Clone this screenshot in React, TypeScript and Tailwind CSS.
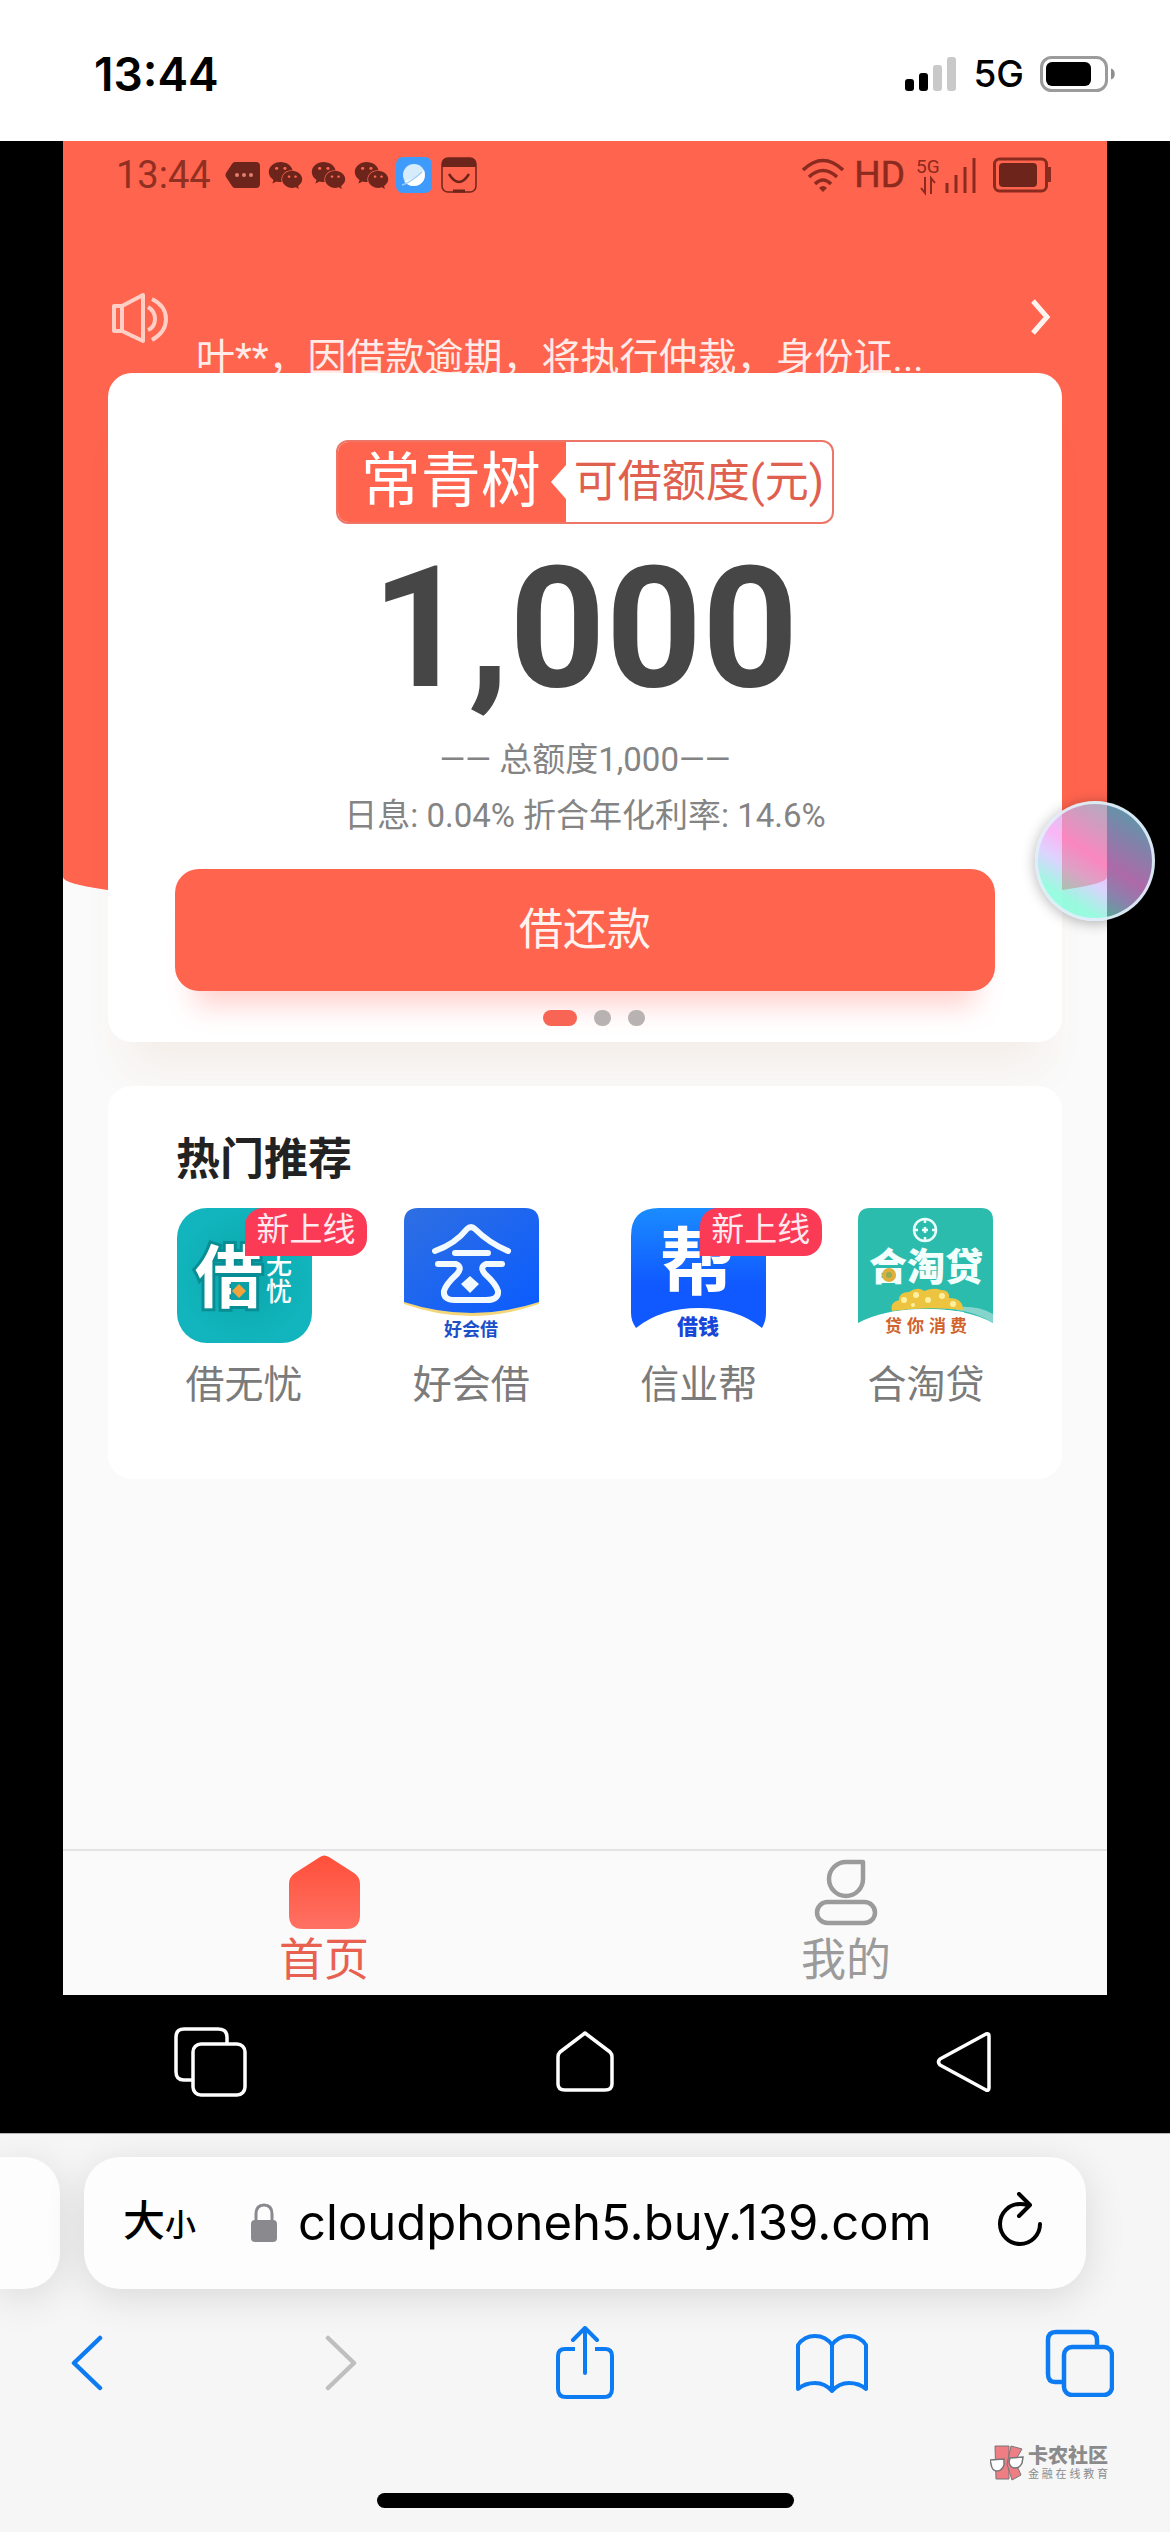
import React from "react";
import { FaWeixin } from "react-icons/fa";

const CJK = "font-['Roboto','Noto_Sans_CJK_SC',sans-serif]";

function IosStatusBar() {
  return (
    <header className="flex h-[141px] shrink-0 items-start justify-between bg-white pr-[54px] pl-[94px] font-['Inter',sans-serif] text-black">
      <time className="pt-[46px] text-[46px] leading-[56px] font-semibold">13:44</time>
      <div className="flex items-center pt-[46px]">
        <svg className="mr-[16px] h-[35px] w-[52px]" viewBox="0 0 52 35" aria-label="信号">
          <rect x="0" y="22" width="9" height="12" rx="3" fill="#000" />
          <rect x="14" y="16" width="9" height="18" rx="3" fill="#000" />
          <rect x="28" y="8" width="9" height="26" rx="3" fill="#c9c9c9" />
          <rect x="42" y="0" width="9" height="34" rx="3" fill="#c9c9c9" />
        </svg>
        <span className="mr-[16px] text-[37px] leading-[56px] font-medium">5G</span>
        <svg className="h-[36px] w-[76px]" viewBox="0 0 76 36" aria-label="电量">
          <rect x="1.5" y="1.5" width="65" height="33" rx="10" fill="none" stroke="#9b9b9b" strokeWidth="3" />
          <rect x="6" y="6" width="45" height="24" rx="6" fill="#000" />
          <path d="M71 12.5c5 1 5 10 0 11z" fill="#8e8e8e" />
        </svg>
      </div>
    </header>
  );
}

function AndroidStatusBar() {
  return (
    <div className="flex h-[72px] items-start justify-between pt-[10px] pr-[56px] pl-[53px] text-[#6d251b]">
      <div className="flex items-center">
        <span className="mr-[14px] text-[38px] leading-[48px] text-[#8f3023]">13:44</span>
        <svg className="mr-[8px] h-[28px] w-[35px]" viewBox="0 0 35 28">
          <path d="M10 1h21q4 0 4 4v18q0 4-4 4H10q-2 0-3-2L1 16q-1-2 0-4L7 3q1-2 3-2z" fill="currentColor" />
          <circle cx="12" cy="14" r="2" fill="#e0806f" />
          <circle cx="19" cy="14" r="2" fill="#e0806f" />
          <circle cx="26" cy="14" r="2" fill="#e0806f" />
        </svg>
        <div className="mr-[7px] flex gap-[8px]">
          <FaWeixin size={35} />
          <FaWeixin size={35} />
          <FaWeixin size={35} />
        </div>
        <svg className="mr-[9px] h-[36px] w-[36px]" viewBox="0 0 36 36">
          <rect width="36" height="36" rx="7" fill="#3f9bfb" />
          <circle cx="18" cy="18" r="11" fill="#d6ecfd" />
          <path d="M8 24q11-1 20-11q3 12-7 15.500q-8 2-13-4.500z" fill="#fff" />
          <path d="M6 28q8-2 20-13" fill="none" stroke="#9fd0fb" strokeWidth="1.500" />
        </svg>
        <svg className="h-[36px] w-[36px]" viewBox="0 0 36 36">
          <rect x="1" y="1" width="34" height="34" rx="6" fill="none" stroke="currentColor" strokeWidth="1.500" />
          <path d="M1 10V7q0-6 6-6h22q6 0 6 6v3z" fill="currentColor" />
          <path d="M8 17q10 16 20 0" fill="none" stroke="currentColor" strokeWidth="2.500" />
          <path d="M12 34h12" stroke="currentColor" strokeWidth="3" />
        </svg>
      </div>
      <div className="flex h-[48px] items-center text-[#8b2a1e]">
        <svg className="mr-[10px] h-[34px] w-[42px]" viewBox="0 0 42 34" fill="none" stroke="currentColor" strokeWidth="3.500">
          <path d="M1 12q20-19 40 0M7 19q14-13 28 0M13 26q8-8 16 0" />
          <path d="M17 30q4-4 8 0l-4 4z" fill="currentColor" stroke="none" />
        </svg>
        <span className="mr-[11px] text-[37px] leading-[48px] [-webkit-text-stroke:0.5px_currentColor]">HD</span>
        <svg className="mr-[16px] h-[40px] w-[61px] overflow-visible" viewBox="0 0 61 40">
          <text x="0" y="18" fontSize="19" fontFamily="Roboto, sans-serif" fill="currentColor">5G</text>
          <path d="M9 22v16l-4-5M15 39V23l4 5" fill="none" stroke="currentColor" strokeWidth="2" />
          <path d="M31 28v10M40 20v18M49 12v26M58 3v35" stroke="currentColor" strokeWidth="3" />
        </svg>
        <svg className="h-[36px] w-[58px]" viewBox="0 0 58 36">
          <rect x="1.500" y="2" width="52" height="32" rx="5" fill="none" stroke="currentColor" strokeWidth="3" />
          <rect x="6" y="6" width="38" height="24" rx="4" fill="#6d251b" />
          <path d="M54 10h4v15h-4z" fill="currentColor" />
        </svg>
      </div>
    </div>
  );
}

function Notice() {
  return (
    <div className="flex h-[160px] items-start overflow-hidden pr-[56px] pl-[48px]">
      <svg className="mt-[80px] h-[51px] w-[58px] shrink-0" viewBox="0 0 58 51" fill="none" stroke="#ffcfc6" strokeWidth="4">
        <path d="M3 13h8v25H3zM11 13L32 2v46L11 38" strokeLinejoin="round" />
        <path d="M37 14q7 4 7 12t-7 11M41 6q14 7 14 20T41 47" />
      </svg>
      <a href="#notice" className="mt-[117px] ml-[27px] min-w-0 flex-1 text-[39px] leading-[56px] whitespace-nowrap text-[#ffece8]">
        叶**，因借款逾期，将执行仲裁，身份证...
      </a>
      <button type="button" aria-label="查看公告" className="mt-[84px]">
        <svg className="h-[40px] w-[20px]" viewBox="0 0 20 40" fill="none" stroke="#fff3f0" strokeWidth="5">
          <path d="M2 4L16 20L2 36" />
        </svg>
      </button>
    </div>
  );
}

function LoanCard() {
  return (
    <section className="relative mx-[45px] flex flex-col items-center rounded-[24px] bg-white px-[67px] pt-[67px] pb-[16px] shadow-[0_44px_44px_-20px_rgba(190,110,50,0.09)]">
      <div className="flex h-[84px] items-stretch overflow-hidden rounded-[12px] border-2 border-[#ee7668]">
        <span className="flex items-center bg-[#ff644e] pr-[8px] pl-[23px] text-[60px] leading-[80px] text-white">常青树</span>
        <svg className="h-full w-[17px] bg-[#ff644e]" viewBox="0 0 17 80">
          <path d="M17 23L2 40L17 57z" fill="#fff" />
        </svg>
        <span className="flex items-center px-[8px] text-[44px] leading-[80px] text-[#e0604f]">可借额度(元)</span>
      </div>
      <p className="mt-[9px] text-[168px] leading-[192px] font-bold text-[#464646]">1,000</p>
      <p className="mt-[7px] text-[33px] leading-[56px] text-[#848484]">—— 总额度1,000——</p>
      <p className="text-[33px] leading-[56px] text-[#848484]">日息: 0.04% 折合年化利率: 14.6%</p>
      <button
        type="button"
        className="mt-[25px] h-[122px] w-full rounded-[24px] bg-[#ff644e] text-[44px] leading-[56px] text-[#fff3ef] shadow-[0_34px_28px_-20px_rgba(255,100,90,0.30)]"
      >
        借还款
      </button>
      <div className="mt-[19px] flex gap-[17px] pl-[18px]">
        <i className="h-[16px] w-[34px] rounded-full bg-[#f96555]" />
        <i className="h-[16px] w-[17px] rounded-full bg-[#b8b2b1]" />
        <i className="h-[16px] w-[17px] rounded-full bg-[#b8b2b1]" />
      </div>
    </section>
  );
}

const logoFont = "'Noto Sans CJK SC', sans-serif";

function LogoJieWuYou() {
  return (
    <svg className="h-[135px] w-[135px]" viewBox="0 0 135 135">
      <defs>
        <radialGradient id="teal">
          <stop offset="0" stopColor="#0aa5aa" />
          <stop offset="1" stopColor="#12b5bd" />
        </radialGradient>
      </defs>
      <rect width="135" height="135" rx="30" fill="url(#teal)" />
      <text x="18" y="94" fontSize="68" fontWeight="700" fontFamily={logoFont} fill="#fff" stroke="#078e94" strokeWidth="6" paintOrder="stroke">借</text>
      <text x="89" y="66" fontSize="26" fontWeight="500" fontFamily={logoFont} fill="#fff">无</text>
      <text x="89" y="93" fontSize="26" fontWeight="500" fontFamily={logoFont} fill="#fff">忧</text>
      <path d="M54 74h18v18H54z" fill="#0aa0a6" />
      <path d="M62 76l7 7l-7 7l-7-7z" fill="#f2a33c" />
    </svg>
  );
}

function LogoHaoHuiJie() {
  return (
    <svg className="h-[135px] w-[135px]" viewBox="0 0 135 135">
      <defs>
        <linearGradient id="royal" x1="0" y1="0" x2="1" y2="1">
          <stop offset="0" stopColor="#2f6fe2" />
          <stop offset="1" stopColor="#0a5cff" />
        </linearGradient>
      </defs>
      <path d="M0 20V96q67 24 135 0V20z" fill="#f3d67a" />
      <path d="M14 0H121q14 0 14 14V94q-67 22-135 0V14Q0 0 14 0z" fill="url(#royal)" />
      <g fill="none" stroke="#f2faff" strokeWidth="6" strokeLinecap="round" strokeLinejoin="round">
        <path d="M31 43Q51 36 63 21Q67 17 71 21Q85 35 104 43" />
        <path d="M51 45H84M34 56H52Q59 59 53 66Q42 76 40 83Q39 92 51 92H82Q95 92 94 83Q92 76 81 66Q75 59 82 56H98" />
      </g>
      <path d="M66 68l9 8l-9 9l-9-9z" fill="#f2faff" />
      <text x="67" y="128" fontSize="18" fontWeight="700" textAnchor="middle" fontFamily={logoFont} fill="#1d50c8">好会借</text>
    </svg>
  );
}

function LogoXinYeBang() {
  return (
    <svg className="h-[135px] w-[135px]" viewBox="0 0 135 135">
      <defs>
        <linearGradient id="azure" x1="0" y1="0" x2="0" y2="1">
          <stop offset="0" stopColor="#1a8cff" />
          <stop offset="0.650" stopColor="#1058ff" />
        </linearGradient>
      </defs>
      <path d="M28 0H107q28 0 28 28V105q0 8-4 15q-25-20-63-20T5 120Q0 113 0 105V28Q0 0 28 0z" fill="url(#azure)" />
      <text x="66" y="81" fontSize="74" fontWeight="700" textAnchor="middle" fontFamily={logoFont} fill="#fff">帮</text>
      <text x="67" y="126" fontSize="21" fontWeight="900" textAnchor="middle" fontFamily={logoFont} fill="#1746d8">借钱</text>
    </svg>
  );
}

function LogoHeTaoDai() {
  return (
    <svg className="h-[135px] w-[135px]" viewBox="0 0 135 135">
      <path d="M12 0H123q12 0 12 12V115q-25-14-67-14T0 115V12Q0 0 12 0z" fill="#2bbcae" />
      <path d="M98 99Q120 97 135 106V115Q118 104 98 102z" fill="#86d5cc" />
      <g fill="none" stroke="#e9fffb" strokeWidth="2.500">
        <circle cx="67" cy="22" r="11" />
        <path d="M67 11v4M67 29v4M56 22h4M74 22h4M64 22h6M67 19v6" />
      </g>
      <text x="68" y="72" fontSize="38" fontWeight="900" textAnchor="middle" fontFamily={logoFont} fill="#f2fffd">合淘贷</text>
      <circle cx="31" cy="67" r="7" fill="#e0ae3a" />
      <circle cx="31" cy="67" r="3" fill="#8fae55" />
      <path d="M34 103q-3-8 7-11q0-8 10-8q9-6 15-1q10-4 17-1q9 0 8 8q14 0 14 12q-35-4-71 1z" fill="#ecc43f" />
      <g fill="#fff0a0">
        <circle cx="46" cy="92" r="3" />
        <circle cx="58" cy="87" r="3" />
        <circle cx="70" cy="92" r="3" />
        <circle cx="84" cy="88" r="3" />
        <circle cx="95" cy="96" r="3" />
        <circle cx="55" cy="97" r="2" />
      </g>
      <path d="M32 104Q68 98 106 104V108H32z" fill="#fff" />
      <text y="124" fontSize="17" fontWeight="700" fontFamily={logoFont} fill="#d0622c" x="27 49 71 92">贷你消费</text>
    </svg>
  );
}

const products = [
  { name: "借无忧", Logo: LogoJieWuYou, fresh: true },
  { name: "好会借", Logo: LogoHaoHuiJie, fresh: false },
  { name: "信业帮", Logo: LogoXinYeBang, fresh: true },
  { name: "合淘贷", Logo: LogoHeTaoDai, fresh: false },
];

function HotList() {
  return (
    <section className="relative mx-[45px] mt-[44px] rounded-[24px] bg-white px-[68px] pt-[46px] pb-[66px]">
      <h2 className="text-[44px] leading-[56px] font-bold text-[#222]">热门推荐</h2>
      <ul className="mt-[20px] flex justify-between">
        {products.map(({ name, Logo, fresh }) => (
          <li key={name}>
            <a href="#product" className="relative flex w-[136px] flex-col items-center">
              <Logo />
              {fresh && (
                <span className="absolute top-0 left-[69px] h-[48px] w-[122px] rounded-[18px] rounded-bl-none bg-[#fb3a56] text-center text-[33px] leading-[44px] whitespace-nowrap text-[#ffe9ee]">
                  新上线
                </span>
              )}
              <span className="mt-[14px] text-[39px] leading-[56px] whitespace-nowrap text-[#7b7b7b]">{name}</span>
            </a>
          </li>
        ))}
      </ul>
    </section>
  );
}

function TabBar() {
  return (
    <nav className="mt-auto grid h-[146px] grid-cols-2 border-t-2 border-[#e4e4e4]">
      <a href="#home" className="flex flex-col items-center pt-[4px] text-[#e8604f]">
        <svg className="h-[74px] w-[71px]" viewBox="0 0 71 74">
          <defs>
            <linearGradient id="home" x1="0" y1="0" x2="0" y2="1">
              <stop offset="0" stopColor="#ff4f3a" />
              <stop offset="1" stopColor="#ff7163" />
            </linearGradient>
          </defs>
          <path d="M31 2q4-3 9 0L65 18q6 4 6 11V60q0 14-14 14H14Q0 74 0 60V29q0-7 6-11z" fill="url(#home)" />
        </svg>
        <span className="mt-[4px] text-[45px] leading-[56px]">首页</span>
      </a>
      <a href="#mine" className="flex flex-col items-center pt-[4px] text-[#9b9b9b]">
        <svg className="h-[74px] w-[64px]" viewBox="0 0 64 74" fill="none" stroke="currentColor" strokeWidth="4.500">
          <path d="M32 7H49V24A17 17 0 1 1 32 7z" strokeLinejoin="round" />
          <rect x="3" y="47" width="58" height="21" rx="10.500" />
        </svg>
        <span className="mt-[4px] text-[45px] leading-[56px]">我的</span>
      </a>
    </nav>
  );
}

function AndroidNav() {
  return (
    <nav className="flex h-[138px] shrink-0 items-center justify-between bg-black pr-[166px] pb-[4px] pl-[174px]">
      <button type="button" aria-label="最近任务">
        <svg className="h-[72px] w-[73px]" viewBox="0 0 73 72" fill="none" stroke="#fff" strokeWidth="3.500">
          <path d="M18 54H10Q2 54 2 46V11Q2 3 10 3H44Q53 3 53 11V17" />
          <rect x="19" y="18" width="52" height="51" rx="8" />
        </svg>
      </button>
      <button type="button" aria-label="主屏幕">
        <svg className="h-[62px] w-[58px]" viewBox="0 0 58 62" fill="none" stroke="#fff" strokeWidth="3.500" strokeLinejoin="round">
          <path d="M29 2L54 21Q56 23 56 26V53Q56 59 49 59H9Q2 59 2 53V26Q2 23 4 21z" />
        </svg>
      </button>
      <button type="button" aria-label="返回" className="flex w-[81px] justify-center">
        <svg className="h-[62px] w-[56px]" viewBox="0 0 56 62" fill="none" stroke="#fff" strokeWidth="3.500" strokeLinejoin="round">
          <path d="M50 3Q53 2 53 5V57Q53 60 50 59L4 34Q1 31 4 28z" />
        </svg>
      </button>
    </nav>
  );
}

function SafariBar() {
  return (
    <footer className="shrink-0 overflow-hidden border-t border-[#b5b5b5] bg-[#f6f6f6] font-['Inter','Noto_Sans_CJK_SC',sans-serif]">
      <div className="flex pt-[23px]">
        <div className="h-[132px] w-[60px] shrink-0 rounded-r-[36px] bg-[#fdfdfd] shadow-[0_8px_40px_rgba(0,0,0,0.12)]" />
        <div className="mr-[84px] ml-[24px] flex h-[132px] min-w-0 flex-1 items-center rounded-[36px] bg-[#fdfdfd] pr-[42px] pl-[39px] text-black shadow-[0_8px_40px_rgba(0,0,0,0.12)]">
          <button type="button" aria-label="大小" className="flex items-baseline leading-[56px] font-medium">
            <span className="text-[42px]">大</span>
            <span className="text-[31px]">小</span>
          </button>
          <svg className="ml-[54px] h-[40px] w-[28px] shrink-0" viewBox="0 0 28 40">
            <rect x="1" y="17" width="26" height="22" rx="4" fill="#8a898e" />
            <path d="M6 18V11Q6 2 14 2T22 11V18" fill="none" stroke="#8a898e" strokeWidth="3" />
          </svg>
          <input
            aria-label="网址"
            readOnly
            value="cloudphoneh5.buy.139.com"
            className="ml-[20px] min-w-0 flex-1 bg-transparent text-[49px] leading-[64px] outline-none"
          />
          <button type="button" aria-label="重新载入">
            <svg className="h-[62px] w-[48px]" viewBox="0 0 48 62" fill="none" stroke="#000" strokeWidth="4" strokeLinecap="round" strokeLinejoin="round">
              <path d="M32 13Q28 12 24 12A20 20 0 1 0 44 32" />
              <path d="M23 2L34 13L23 24" />
            </svg>
          </button>
        </div>
      </div>
      <div className="mt-[33px] flex h-[82px] items-center justify-between pr-[56px] pl-[70px] text-[#0d7bf2]">
        <button type="button" aria-label="后退">
          <svg className="h-[56px] w-[34px]" viewBox="0 0 34 56" fill="none" stroke="currentColor" strokeWidth="4.500" strokeLinecap="round" strokeLinejoin="round">
            <path d="M30 3L4 28L30 53" />
          </svg>
        </button>
        <button type="button" aria-label="前进" disabled className="ml-[43px] text-[#bfbfbf]">
          <svg className="h-[56px] w-[34px]" viewBox="0 0 34 56" fill="none" stroke="currentColor" strokeWidth="4.500" strokeLinecap="round" strokeLinejoin="round">
            <path d="M4 3L30 28L4 53" />
          </svg>
        </button>
        <button type="button" aria-label="分享" className="ml-[21px]">
          <svg className="h-[74px] w-[58px]" viewBox="0 0 58 74" fill="none" stroke="currentColor" strokeWidth="4" strokeLinecap="round" strokeLinejoin="round">
            <path d="M19 23H9Q2 23 2 30V63Q2 71 10 71H48Q56 71 56 63V30Q56 23 49 23H39" strokeLinecap="butt" />
            <path d="M29 47V3M17 14L29 2L41 14" />
          </svg>
        </button>
        <button type="button" aria-label="书签" className="ml-[5px]">
          <svg className="h-[60px] w-[72px]" viewBox="0 0 72 60" fill="none" stroke="currentColor" strokeWidth="4" strokeLinecap="round" strokeLinejoin="round">
            <path d="M36 12Q30 3 19 3T2 12V56Q9 50 19 50T36 58Q43 50 53 50T70 56V12Q64 3 53 3T36 12V58" />
          </svg>
        </button>
        <button type="button" aria-label="标签页">
          <svg className="h-[68px] w-[69px]" viewBox="0 0 69 68" fill="none" stroke="currentColor" strokeWidth="4.500">
            <path d="M18 53H10Q3 53 3 45V11Q3 3 11 3H44Q52 3 52 11V18" />
            <rect x="19" y="18" width="48" height="48" rx="8" />
          </svg>
        </button>
      </div>
      <div className="mt-[40px] mr-[62px] flex h-[38px] items-center justify-end gap-[4px]">
        <svg className="h-[36px] w-[34px]" viewBox="0 0 34 36">
          <g fill="#ee7d84" stroke="#777" strokeWidth="1">
            <path d="M5 1h14v33H6z" />
            <path d="M21 1l11 3l-7 12l6 14l-9 5l-5-16z" />
          </g>
          <path d="M0 15l14-1v6q-2 6-7 6t-6-7zM20 13l13-1l-1 6q-2 5-7 5t-6-6z" fill="#fff" stroke="#777" strokeWidth="1.500" />
        </svg>
        <div className="flex flex-col text-[#8b8b8b]">
          <span className="text-[20px] leading-[22px] font-black">卡农社区</span>
          <span className="flex justify-between text-[11px] leading-[14px]">
            {Array.from("金融在线教育").map((c) => (
              <span key={c}>{c}</span>
            ))}
          </span>
        </div>
      </div>
      <div className="mx-auto mt-[11px] mb-[24px] h-[15px] w-[417px] rounded-full bg-black" />
    </footer>
  );
}

export default function App() {
  return (
    <main className="flex min-h-screen flex-col bg-black">
      <IosStatusBar />
      <div className={`relative flex flex-1 flex-col px-[63px] ${CJK}`}>
        <div className="relative flex flex-1 flex-col bg-[#fafafa]">
          <div className="absolute inset-x-0 top-0 h-[768px] rounded-b-[50%_32px] bg-[#ff644e]" />
          <div className="relative">
            <AndroidStatusBar />
            <Notice />
          </div>
          <LoanCard />
          <HotList />
          <TabBar />
        </div>
        <button
          type="button"
          aria-label="悬浮菜单"
          className="absolute top-[660px] right-[15px] size-[120px] rounded-full border-[3px] border-[#e2effa]/90 bg-[linear-gradient(212deg,rgba(135,205,235,0.72)_12%,rgba(248,150,240,0.7)_48%,rgba(205,190,255,0.68)_62%,rgba(110,250,210,0.7)_80%)] shadow-[0_2px_14px_rgba(0,0,0,0.3)]"
        />
      </div>
      <AndroidNav />
      <SafariBar />
    </main>
  );
}
